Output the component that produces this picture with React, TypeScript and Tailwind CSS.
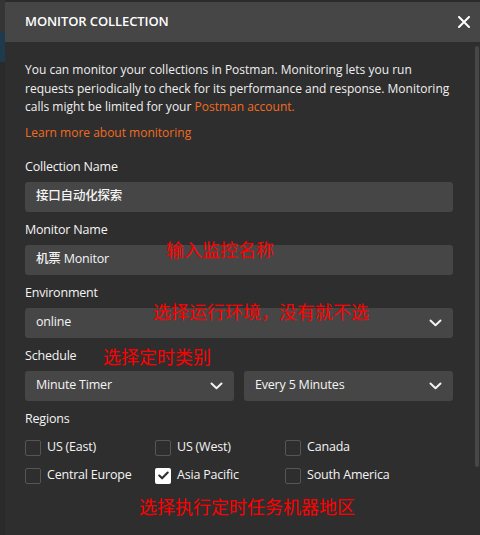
import React from 'react';

const Chevron = () => (
  <svg width="13" height="8" viewBox="0 0 13 8" className="shrink-0">
    <polyline points="1.5,1.5 6.5,6.2 11.5,1.5" fill="none" stroke="#f2f2f2" strokeWidth="2" strokeLinecap="round" strokeLinejoin="round" />
  </svg>
);

function Label({ children }: { children: React.ReactNode }) {
  return <div className="h-[18px] leading-[18px] text-[12.5px] tracking-[-0.2px] font-medium text-[#f4f4f4]">{children}</div>;
}

function Field({ value, select }: { value: string; select?: boolean }) {
  return (
    <div className="h-[30px] rounded-[3px] bg-[#464646] flex items-center justify-between pl-[11px] pr-[11px] text-[12.5px] tracking-[-0.2px] font-medium text-[#f4f4f4]">
      <span>{value}</span>
      {select && <Chevron />}
    </div>
  );
}

function Check({ label, checked }: { label: string; checked?: boolean }) {
  return (
    <div className="flex items-center gap-[6px] h-[16px]">
      {checked ? (
        <span className="w-[16px] h-[16px] rounded-[2px] bg-white flex items-center justify-center">
          <svg width="11" height="9" viewBox="0 0 11 9">
            <polyline points="1.3,4.6 4.1,7.3 9.7,1.5" fill="none" stroke="#2e2e2e" strokeWidth="2.1" strokeLinecap="round" strokeLinejoin="round" />
          </svg>
        </span>
      ) : (
        <span className="w-[16px] h-[16px] rounded-[2px] border border-[#555555]" />
      )}
      <span className="text-[12.5px] tracking-[-0.2px] font-medium text-[#f4f4f4]">{label}</span>
    </div>
  );
}

function Note({ text, className }: { text: string; className: string }) {
  return (
    <div className={`absolute text-[18px] leading-[18px] text-[#ff0000] font-['Noto_Sans_CJK_SC',sans-serif] ${className}`}>
      {text}
    </div>
  );
}

export default function App() {
  return (
    <div className="relative w-[480px] h-[535px] overflow-hidden bg-[#2b2b2b] flex font-['Open_Sans','Noto_Sans_CJK_SC',sans-serif]">
      {/* backdrop strip behind the modal */}
      <div className="w-[5px] shrink-0 flex flex-col">
        <div className="h-[32px] bg-[#353535]" />
        <div className="h-[30px] bg-[#1f3a4c]" />
        <div className="flex-1 bg-[#2a2a2a]" />
      </div>

      {/* modal */}
      <div className="flex-1 mt-[2px] flex flex-col bg-[#2e2e2e]">
        <div className="h-[40px] shrink-0 bg-[#464646] flex items-center justify-between pl-[20px] pr-[10px]">
          <span className="text-[13px] font-semibold text-white tracking-[-0.1px]">MONITOR COLLECTION</span>
          <svg width="12" height="12" viewBox="0 0 12 12">
            <path d="M1 1L11 11M11 1L1 11" stroke="#ffffff" strokeWidth="2" strokeLinecap="round" />
          </svg>
        </div>

        <div className="pl-[20px] pr-[27px] pt-[19px]">
          <p className="text-[12px] leading-[18.5px] text-[#f0f0f0]">
            You can monitor your collections in Postman. Monitoring lets you run requests periodically to check for its performance and response. Monitoring calls might be limited for your{' '}
            <span className="text-[#f26b21]">Postman account.</span>
          </p>
          <div className="mt-[7px] h-[18px] leading-[18px] text-[12px] text-[#f26b21]">Learn more about monitoring</div>

          <div className="mt-[16px]">
            <Label>Collection Name</Label>
            <div className="mt-[6px]"><Field value="接口自动化探索" /></div>
          </div>
          <div className="mt-[9px]">
            <Label>Monitor Name</Label>
            <div className="mt-[6px]"><Field value="机票 Monitor" /></div>
          </div>
          <div className="mt-[9px]">
            <Label>Environment</Label>
            <div className="mt-[6px]"><Field value="online" select /></div>
          </div>
          <div className="mt-[9px]">
            <Label>Schedule</Label>
            <div className="mt-[6px] grid grid-cols-2 gap-[10px]">
              <Field value="Minute Timer" select />
              <Field value="Every 5 Minutes" select />
            </div>
          </div>
          <div className="mt-[9px]">
            <Label>Regions</Label>
            <div className="mt-[12px] grid grid-cols-[130px_130px_1fr] gap-y-[12px]">
              <Check label="US (East)" />
              <Check label="US (West)" />
              <Check label="Canada" />
              <Check label="Central Europe" />
              <Check label="Asia Pacific" checked />
              <Check label="South America" />
            </div>
          </div>
        </div>
      </div>

      {/* scrollbar */}
      <div className="absolute right-[1px] top-[46px] w-[4px] h-[421px] rounded-[2px] bg-[#474747]" />

      {/* red annotations */}
      <Note text="输入监控名称" className="left-[166px] top-[240px]" />
      <Note text="选择运行环境，没有就不选" className="left-[153px] top-[302px]" />
      <Note text="选择定时类别" className="left-[103px] top-[347px]" />
      <Note text="选择执行定时任务机器地区" className="left-[139px] top-[497px]" />
    </div>
  );
}
